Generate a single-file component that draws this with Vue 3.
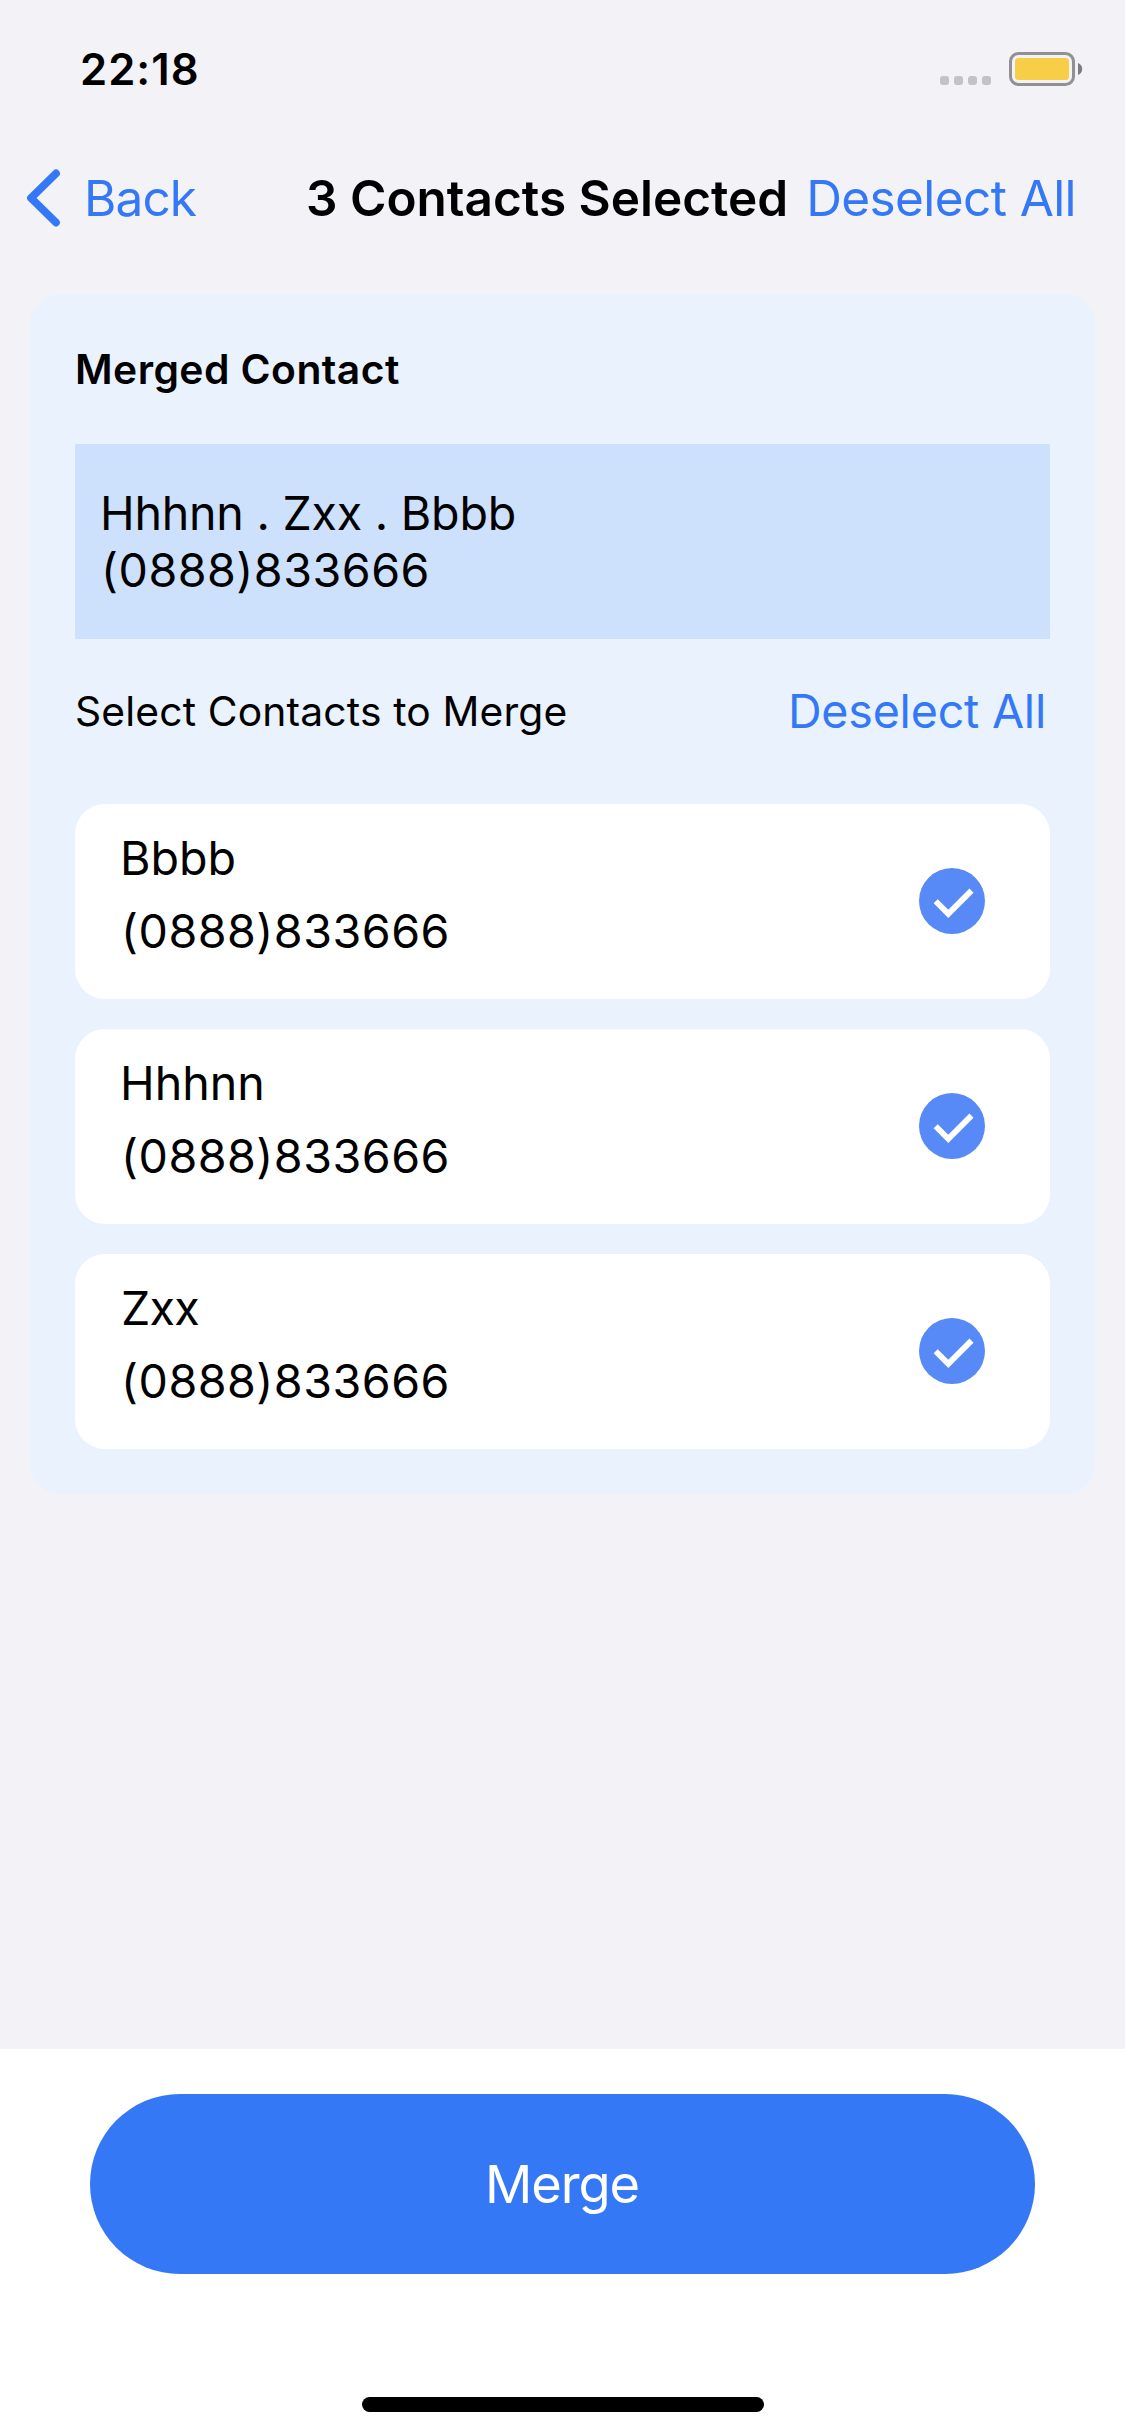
<script setup>
import { ref } from 'vue'

const contacts = ref([
  { name: 'Bbbb', phone: '(0888)833666', kind: 'plain' },
  { name: 'Hhhnn', phone: '(0888)833666', kind: 'plain' },
  { name: 'Zxx', phone: '(0888)833666', kind: 'narrow' }
])
</script>

<template>
  <div class="screen">
    <header class="status">
      <span class="time">22:18</span>
      <div class="indicators">
        <svg class="dots" width="51" height="9" viewBox="0 0 51 9">
          <rect v-for="i in 4" :key="i" :x="(i - 1) * 14" width="9" height="9" rx="3" fill="#c3c3c6" />
        </svg>
        <svg class="battery" width="74" height="34" viewBox="0 0 74 34">
          <rect x="1.5" y="1.5" width="63" height="31" rx="8" fill="none" stroke="#919194" stroke-width="3" />
          <rect x="6" y="6" width="54" height="22" rx="3.5" fill="#f8ce46" />
          <path d="M69 11c2.600 1 4.200 3.300 4.200 6s-1.600 5-4.200 6z" fill="#7d7d80" />
        </svg>
      </div>
    </header>

    <nav class="nav">
      <button class="back">
        <svg width="34" height="58" viewBox="0 0 34 58">
          <path d="M29 4.500L4 29l25 24.500" fill="none" stroke="#3478f6" stroke-width="7.800" stroke-linecap="round" stroke-linejoin="round" />
        </svg>
        <span>Back</span>
      </button>
      <h1 class="title">3 Contacts Selected</h1>
      <button class="deselect-nav">Deselect All</button>
    </nav>

    <main class="content">
      <section class="card">
        <h2 class="heading">Merged Contact</h2>
        <div class="merged">
          <span class="merged-name">Hhhnn . Zxx . Bbbb</span>
          <span class="phone">(0888)833666</span>
        </div>
        <div class="select-bar">
          <span class="select-label">Select Contacts to Merge</span>
          <button class="deselect">Deselect All</button>
        </div>
        <ul class="list">
          <li v-for="c in contacts" :key="c.name" class="contact">
            <div class="info">
              <span :class="['name', c.kind]">{{ c.name }}</span>
              <span class="phone">{{ c.phone }}</span>
            </div>
            <svg width="66" height="66" viewBox="0 0 66 66">
              <circle cx="33" cy="33" r="33" fill="#5789f7" />
              <path d="M16.700 33.200l12.600 12.600 23.200-23.200" fill="none" stroke="#fff" stroke-width="5.800" />
            </svg>
          </li>
        </ul>
      </section>
    </main>

    <footer class="footer">
      <button class="merge">Merge</button>
      <div class="home"></div>
    </footer>
  </div>
</template>

<style>
body {
  margin: 0;
}
</style>

<style scoped>
.screen {
  display: flex;
  flex-direction: column;
  width: 1125px;
  height: 2436px;
  overflow: hidden;
  background: #f2f2f7;
  color: #000;
  font-family: Inter, "Liberation Sans", sans-serif;
  white-space: nowrap;
}
button {
  border: 0;
  margin: 0;
  padding: 0;
  background: none;
  color: #3478f6;
  font: inherit;
}
h1,
h2,
ul {
  margin: 0;
  padding: 0;
  list-style: none;
}
svg {
  display: block;
  flex: none;
}
.status {
  display: flex;
  align-items: center;
  justify-content: space-between;
  box-sizing: border-box;
  height: 138px;
  padding: 0 42px 0 80px;
}
.time {
  font-size: 43.6px;
  font-weight: 600;
  letter-spacing: 1px;
}
.indicators {
  display: flex;
  align-items: flex-end;
  gap: 18px;
}
.dots {
  margin-bottom: 1px;
}
.nav {
  display: grid;
  grid-template-columns: 279px 1fr auto;
  align-items: center;
  height: 120px;
  padding: 0 49px 0 27px;
  font-size: 49.5px;
}
.back {
  display: flex;
  align-items: center;
  gap: 23px;
  letter-spacing: -0.9px;
}
.title {
  font-size: 49.5px;
  font-weight: 600;
}
.deselect-nav {
  letter-spacing: -0.59px;
}
.content {
  flex: 1;
  padding: 36px 30px 0;
}
.card {
  padding: 0 45px 45px;
  border-radius: 30px;
  background: #eaf2fe;
}
.heading {
  font-size: 40.8px;
  font-weight: 600;
  line-height: 150px;
  letter-spacing: 0.45px;
}
.merged {
  display: flex;
  flex-direction: column;
  box-sizing: border-box;
  height: 195px;
  padding: 41px 25px 0;
  background: #cde1fd;
  font-size: 46.6px;
  line-height: 57px;
}
.merged-name {
  letter-spacing: -0.24px;
}
.phone {
  padding-left: 1px;
  letter-spacing: 0.5px;
}
.select-bar {
  display: flex;
  align-items: center;
  justify-content: space-between;
  height: 144px;
  margin-bottom: 21px;
  padding: 0 4px 0 0;
}
.select-label {
  font-size: 40.8px;
  letter-spacing: 0.15px;
}
.deselect {
  font-size: 46.6px;
  letter-spacing: -0.22px;
}
.list {
  display: flex;
  flex-direction: column;
  gap: 30px;
}
.contact {
  display: flex;
  align-items: center;
  justify-content: space-between;
  box-sizing: border-box;
  height: 195px;
  padding: 0 65px 1px 45px;
  border-radius: 30px;
  background: #fff;
}
.info {
  display: flex;
  flex-direction: column;
  align-self: flex-start;
  padding-top: 18px;
  font-size: 46.6px;
  line-height: 73px;
}
.narrow {
  padding-left: 1px;
  letter-spacing: -0.8px;
}
.footer {
  display: flex;
  flex-direction: column;
  align-items: center;
  box-sizing: border-box;
  height: 387px;
  padding-top: 45px;
  background: #fff;
}
.merge {
  width: 945px;
  height: 180px;
  padding-right: 1px;
  border-radius: 90px;
  background: #3478f6;
  color: #fff;
  font-size: 52.4px;
  letter-spacing: -1.09px;
}
.home {
  width: 402px;
  height: 15px;
  margin-top: 123px;
  border-radius: 8px;
  background: #000;
}
</style>
